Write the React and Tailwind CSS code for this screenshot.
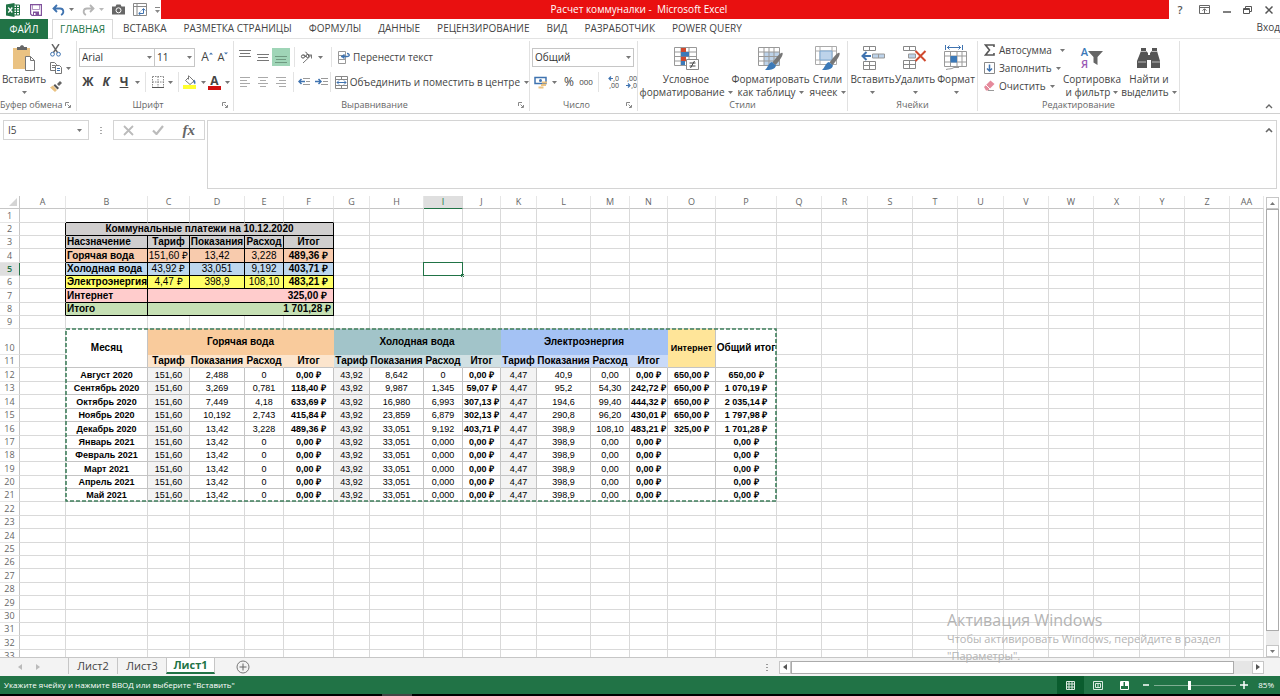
import { useState } from 'react';

const COLUMNS = [
  ['A', 46], ['B', 82], ['C', 42], ['D', 55], ['E', 39], ['F', 50], ['G', 36], ['H', 54], ['I', 39],
  ['J', 38], ['K', 36], ['L', 54], ['M', 39], ['N', 38], ['O', 48], ['P', 61], ['Q', 45], ['R', 46],
  ['S', 45], ['T', 45], ['U', 46], ['V', 45], ['W', 45], ['X', 46], ['Y', 45], ['Z', 45], ['AA', null],
];

// row heights in px, row 10 is the tall header
const ROWS = [
  14, 13, 13, 14, 13, 13, 14, 13, 13, 26, 13, 14, 13, 14, 13, 14, 13, 13, 14, 13, 13,
  14, 13, 14, 13, 13, 14, 13, 14, 13, 13, 14, 13,
];

const MONTHS = [
  ['Август 2020', '151,60', '2,488', '0', '0,00 ₽', '43,92', '8,642', '0', '0,00 ₽', '4,47', '40,9', '0,00', '0,00 ₽', '650,00 ₽', '650,00 ₽'],
  ['Сентябрь 2020', '151,60', '3,269', '0,781', '118,40 ₽', '43,92', '9,987', '1,345', '59,07 ₽', '4,47', '95,2', '54,30', '242,72 ₽', '650,00 ₽', '1 070,19 ₽'],
  ['Октябрь 2020', '151,60', '7,449', '4,18', '633,69 ₽', '43,92', '16,980', '6,993', '307,13 ₽', '4,47', '194,6', '99,40', '444,32 ₽', '650,00 ₽', '2 035,14 ₽'],
  ['Ноябрь 2020', '151,60', '10,192', '2,743', '415,84 ₽', '43,92', '23,859', '6,879', '302,13 ₽', '4,47', '290,8', '96,20', '430,01 ₽', '650,00 ₽', '1 797,98 ₽'],
  ['Декабрь 2020', '151,60', '13,42', '3,228', '489,36 ₽', '43,92', '33,051', '9,192', '403,71 ₽', '4,47', '398,9', '108,10', '483,21 ₽', '325,00 ₽', '1 701,28 ₽'],
  ...['Январь 2021', 'Февраль 2021', 'Март 2021', 'Апрель 2021', 'Май 2021'].map((m) => [
    m, '151,60', '13,42', '0', '0,00 ₽', '43,92', '33,051', '0,000', '0,00 ₽', '4,47', '398,9', '0,00', '0,00 ₽', '', '0,00 ₽',
  ]),
];

const LETTERS = 'BCDEFGHIJKLMNOP'.split('');
const BOLD_COLS = ['B', 'F', 'J', 'N', 'O', 'P'];
const GREY_COLS = ['C', 'G', 'K'];

function buildCells() {
  const cells = {};
  const put = (key, v, cls, span = 1, rowSpan = 1) => { cells[key] = { v, cls, span, rowSpan }; };
  const black = 'border-black text-[10px] ';

  'BCDEF'.split('').forEach((c) => put(c + '1', '', 'border-r-[#d9d9d9] border-b-black'));
  for (let r = 2; r <= 8; r++) put('A' + r, '', 'border-r-black border-b-[#d9d9d9]');

  put('B2', 'Коммунальные платежи на 10.12.2020', black + 'bg-[#d0cece] font-bold text-center', 5);
  ['Насзначение', 'Тариф', 'Показания', 'Расход', 'Итог'].forEach((t, i) => {
    put('BCDEF'[i] + '3', t, black + 'bg-[#d0cece] font-bold ' + (i ? 'text-center' : 'pl-[5px]'));
  });
  [
    [4, 'bg-[#f8cbad]', 'Горячая вода', '151,60 ₽', '13,42', '3,228', '489,36 ₽'],
    [5, 'bg-[#bdd7ee]', 'Холодная вода', '43,92 ₽', '33,051', '9,192', '403,71 ₽'],
    [6, 'bg-[#ffff66]', 'Электроэнергия', '4,47 ₽', '398,9', '108,10', '483,21 ₽'],
  ].forEach(([r, bg, name, ...vals]) => {
    put('B' + r, name, black + bg + ' font-bold pl-[5px]');
    vals.forEach((v, i) => put('CDEF'[i] + r, v, black + bg + ' text-center' + (i === 3 ? ' font-bold' : '')));
  });
  put('B7', 'Интернет', black + 'bg-[#ffcccc] font-bold pl-[5px]');
  put('C7', '325,00 ₽', black + 'bg-[#ffcccc] font-bold text-right pr-2.5', 4);
  put('B8', 'Итого', black + 'bg-[#c6e0b4] font-bold pl-[5px]');
  put('C8', '1 701,28 ₽', black + 'bg-[#c6e0b4] font-bold text-right pr-1.5', 4);

  const head = 'border-transparent font-bold text-center text-[10px] ';
  put('B10', 'Месяц', 'border-[#c4c4c4] font-bold text-center text-[10px]', 1, 2);
  put('C10', 'Горячая вода', head + 'bg-[#f9cb9c]', 4);
  put('G10', 'Холодная вода', head + 'bg-[#a2c4c9]', 4);
  put('K10', 'Электроэнергия', head + 'bg-[#a4c2f4]', 4);
  put('O10', 'Интернет', 'border-r-[#c4c4c4] border-b-[#c4c4c4] font-bold text-center text-[9px] bg-[#ffe599]', 1, 2);
  put('P10', 'Общий итог', 'border-[#c4c4c4] font-bold text-center text-[10px]', 1, 2);
  [['CDEF', 'bg-[#fce5cd]'], ['GHIJ', 'bg-[#d0e0e3]'], ['KLMN', 'bg-[#c9daf8]']].forEach(([cols, bg]) => {
    ['Тариф', 'Показания', 'Расход', 'Итог'].forEach((t, i) => {
      put(cols[i] + '11', t, 'border-r-transparent border-b-[#c4c4c4] font-bold text-center text-[10px] ' + bg);
    });
  });
  MONTHS.forEach((month, m) => {
    month.forEach((v, i) => {
      const c = LETTERS[i];
      const extra = (BOLD_COLS.includes(c) ? ' font-bold' : '') + (GREY_COLS.includes(c) ? ' bg-[#f3f3f3]' : '');
      put(c + (12 + m), v, 'border-[#c4c4c4] text-center text-[9px]' + extra);
    });
  });
  return cells;
}

const CELLS = buildCells();

function Arrow({ className = '' }) {
  return (
    <svg viewBox="0 0 5 3" className={'w-[5px] h-[3px] shrink-0 ' + className} fill="#777">
      <path d="M0 0h5L2.5 3z" />
    </svg>
  );
}

function Sep() {
  return <span className="w-px h-5 bg-[#e3e3e3] shrink-0" />;
}

function Btn({ label, className = '', children }) {
  return (
    <button aria-label={label} className={'flex items-center justify-center shrink-0 ' + className}>{children}</button>
  );
}

function Svg({ w = 16, h = 16, className = '', children }) {
  return (
    <svg width={w} height={h} viewBox={`0 0 ${w} ${h}`} fill="none" className={'shrink-0 ' + className}>{children}</svg>
  );
}

function Group({ title, width, launcher, children }) {
  return (
    <section className={'flex flex-col shrink-0 border-r border-[#e1e1e1] my-0.5 ' + width}>
      <div className="flex-1">{children}</div>
      <div className="h-3 flex items-center text-[9px] leading-3 text-[#666]">
        <span className="flex-1 text-center whitespace-nowrap">{title}</span>
        {launcher && (
          <Btn label={'Параметры: ' + title} className="w-3 mr-0.5">
            <Svg w={6} h={6}><path d="M.5 4V.5H4M2.500 2.500l2.500 2.500M5.500 3v2.500H3" stroke="#888" /></Svg>
          </Btn>
        )}
      </div>
    </section>
  );
}

function BigButton({ lines, width, arrowBelow, children }) {
  return (
    <button className={'flex flex-col items-center shrink-0 text-[10px] leading-[13px] whitespace-nowrap ' + width}>
      <span className="h-[30px] flex items-center justify-center">{children}</span>
      <span>{lines[0]}</span>
      {arrowBelow ? (
        <span className="h-[13px] flex items-center"><Arrow /></span>
      ) : (
        <span className="flex items-center gap-[3px]">{lines[1]}<Arrow /></span>
      )}
    </button>
  );
}

function Lines({ rows, color = '#777' }) {
  return (
    <Svg w={13} h={12}>
      {rows.map(([x, w], i) => <path key={i} d={`M${x} ${i * 3 + 1.5}h${w}`} stroke={color} />)}
    </Svg>
  );
}

function Picker({ label, value, options, width }) {
  return (
    <label className={'relative flex items-center shrink-0 h-[19px] border border-[#c6c6c6] ' + width}>
      <select aria-label={label} defaultValue={value} className="appearance-none w-full h-full pl-0.5 text-[10px] leading-4 text-[#333] bg-white outline-none">
        {options.map((o) => <option key={o}>{o}</option>)}
      </select>
      <Arrow className="absolute right-0.5 pointer-events-none" />
    </label>
  );
}

function TitleBar() {
  return (
    <header className="flex h-[19px] shrink-0 bg-white">
      <div className="w-[161px] shrink-0 flex items-center pl-1.5">
        <Svg w={14} h={14}>
          <path d="M8 2h5.5v10H8" stroke="#217346" fill="#fff" />
          <path d="M8 4.500h5M8 7h5M8 9.500h5M10.500 2v10" stroke="#217346" />
          <path d="M0 1.500L8.500 0v14L0 12.500z" fill="#217346" />
          <path d="M2.300 4.500l4 5M6.300 4.500l-4 5" stroke="#fff" strokeWidth="1.300" />
        </Svg>
        <Btn label="Сохранить" className="ml-2.5">
          <Svg w={12} h={12}>
            <path d="M.6.6h10.800v10.800H2L.6 10z" stroke="#80529c" strokeWidth="1.200" />
            <path d="M2.500 1h7v4.500h-7z" fill="#fff" stroke="#80529c" strokeWidth=".6" />
            <path d="M3 7.500h6V11H3z" fill="#80529c" /><path d="M4 9h1.500v2H4z" fill="#fff" />
          </Svg>
        </Btn>
        <Btn label="Отменить" className="ml-2.5 gap-1">
          <Svg w={13} h={12}>
            <path d="M5 1L1.500 4.500 5 8M2 4.500h6c4 0 4.500 5 1 6.500" stroke="#3f73b0" strokeWidth="1.800" />
          </Svg>
          <Arrow />
        </Btn>
        <Btn label="Повторить" className="ml-2 gap-1">
          <Svg w={13} h={12}>
            <path d="M8 1l3.500 3.500L8 8M11 4.500H5C1 4.500.5 9.500 4 11" stroke="#b5b5b5" strokeWidth="1.800" />
          </Svg>
          <Arrow className="opacity-50" />
        </Btn>
        <Btn label="Снимок" className="ml-2">
          <Svg w={13} h={11}>
            <path d="M0 2.500h3.500L4.500.5h4l1 2H13V10.500H0z" fill="#666" />
            <circle cx="6.500" cy="6.300" r="2.500" stroke="#fff" />
          </Svg>
        </Btn>
        <Btn label="Сводная таблица" className="ml-2">
          <Svg w={14} h={13}>
            <path d="M.5.5h13v12H.5zM.5 3.500h13M4 .5v12" stroke="#888" />
            <path d="M6 10.500h4.500V6M8.700 7.500l1.800-2 1.800 2M7.500 8.800l-1.800 1.700 1.800 1.700" stroke="#3f73b0" />
          </Svg>
        </Btn>
        <Btn label="Настройка панели" className="ml-2">
          <Svg w={5} h={6}><path d="M0 .5h5" stroke="#888" /><path d="M0 3h5L2.500 6z" fill="#888" /></Svg>
        </Btn>
      </div>
      <div className="flex-1 bg-[#e91010] text-white text-[10px] leading-[19px] text-center whitespace-pre pr-[52px]">Расчет коммуналки -  Microsoft Excel</div>
      <div className="w-[111px] shrink-0 flex items-center justify-between pl-[5px] pr-[7px] text-[#555]">
        <Btn label="Справка" className="w-3 text-[11px] leading-4 font-semibold">?</Btn>
        <Btn label="Параметры ленты">
          <Svg w={11} h={9}>
            <path d="M.5.5h10v8H.5zM.5 2.500h10M5.500 8V4M3.500 5.700l2-2 2 2" stroke="#666" />
          </Svg>
        </Btn>
        <Btn label="Свернуть"><Svg w={8} h={9}><path d="M0 7h8" stroke="#555" strokeWidth="1.500" /></Svg></Btn>
        <Btn label="Восстановить">
          <Svg w={9} h={8}><path d="M2.500 2V.5h6v5H7M.5 2.500h6v5h-6zM.5 3.500h6" stroke="#555" /></Svg>
        </Btn>
        <Btn label="Закрыть"><Svg w={8} h={8}><path d="M.5.5l7 7M7.500.5l-7 7" stroke="#555" strokeWidth="1.500" /></Svg></Btn>
      </div>
    </header>
  );
}

function RibbonTabs() {
  const tabs = ['ВСТАВКА', 'РАЗМЕТКА СТРАНИЦЫ', 'ФОРМУЛЫ', 'ДАННЫЕ', 'РЕЦЕНЗИРОВАНИЕ', 'ВИД', 'РАЗРАБОТЧИК', 'POWER QUERY'];
  return (
    <nav className="flex h-5 shrink-0 bg-white text-[10px] leading-5 text-[#444] whitespace-nowrap">
      <button className="w-12 bg-[#217346] text-white">ФАЙЛ</button>
      <span className="w-1 border-b border-[#d9d9d9]" />
      <button className="w-[61px] border-x border-t border-[#d9d9d9] text-[#217346] leading-[19px]">ГЛАВНАЯ</button>
      <div className="flex flex-1 gap-[17px] pl-2.5 border-b border-[#e3e3e3] overflow-hidden">
        {tabs.map((t) => <button key={t} className="leading-[19px]">{t}</button>)}
        <a href="#login" className="ml-auto leading-4">Вход</a>
      </div>
    </nav>
  );
}

function ClipboardGroup() {
  return (
    <Group title="Буфер обмена" width="w-[77px]" launcher>
      <div className="flex pt-0.5">
        <BigButton lines={['Вставить']} width="w-12" arrowBelow>
          <Svg w={24} h={26}>
            <path d="M1 3h17v21H1z" fill="#eac282" />
            <path d="M5 5V2h3c0-2.500 4-2.500 4 0h3v3z" fill="#666" />
            <path d="M13.500 11.500h5l4 4v10h-9z" fill="#fff" stroke="#777" />
            <path d="M18.500 11.500v4h4" stroke="#777" />
          </Svg>
        </BigButton>
        <div className="flex flex-col gap-1 pl-0.5">
          <Btn label="Вырезать" className="h-[14px] w-[11px]">
            <Svg w={11} h={13}>
              <path d="M2 0l5.500 8.500M9 0L3.500 8.500" stroke="#666" strokeWidth="1.400" />
              <circle cx="2.500" cy="10.200" r="1.900" stroke="#3f73b0" /><circle cx="8.500" cy="10.200" r="1.900" stroke="#3f73b0" />
            </Svg>
          </Btn>
          <Btn label="Копировать" className="h-[14px] gap-1">
            <Svg w={12} h={12}>
              <path d="M.5.5h4l2 2v6h-6zM2 3.500h3M2 5.500h3" stroke="#777" />
              <path d="M5.500 3.500h4l2 2v6h-6z" fill="#fff" stroke="#777" /><path d="M7 6.500h3M7 8.500h3" stroke="#3f73b0" />
            </Svg>
            <Arrow />
          </Btn>
          <Btn label="Формат по образцу" className="h-[14px] w-[12px]">
            <Svg w={12} h={11}>
              <path d="M7 3l3-3 2 2-3 3z" fill="#666" /><path d="M5 3l4 4-1.500 1.500-4-4z" fill="#555" />
              <path d="M3 4.500L7 9l-2 2-5-4.500z" fill="#eac282" />
            </Svg>
          </Btn>
        </div>
      </div>
    </Group>
  );
}

function FontGroup() {
  return (
    <Group title="Шрифт" width="w-[157px]" launcher>
      <div className="flex flex-col gap-[5px] pt-1.5 pl-0.5 text-[#444]">
        <div className="flex items-center h-5">
          <Picker label="Шрифт" value="Arial" options={['Arial', 'Calibri']} width="w-[76px]" />
          <Picker label="Размер" value="11" options={['10', '11', '12']} width="w-[40px] border-l-0" />
          <Btn label="Увеличить размер" className="ml-1 w-4 text-[12px]">A<Svg w={4} h={10}><path d="M0 2.500L2 .5l2 2z" fill="#3f73b0" /></Svg></Btn>
          <Btn label="Уменьшить размер" className="w-4 text-[11px]">A<Svg w={4} h={10}><path d="M0 .5h4l-2 2z" fill="#3f73b0" /></Svg></Btn>
        </div>
        <div className="flex items-center h-5">
          <Btn label="Полужирный" className="w-[18px] text-[12px] font-bold">Ж</Btn>
          <Btn label="Курсив" className="w-[18px] text-[12px] font-bold italic">К</Btn>
          <Btn label="Подчеркнутый" className="w-[18px] text-[12px] font-bold underline">Ч</Btn>
          <Btn label="Вид подчеркивания" className="w-2"><Arrow /></Btn>
          <span className="w-1" /><Sep />
          <Btn label="Границы" className="ml-1 w-6 gap-1">
            <Svg w={12} h={12}><path d="M.5.500v11M6 .500v11M11.500.500v11M.500.500h11M.500 6h11" stroke="#888" strokeDasharray="1.500 1" /><path d="M0 11.500h12" stroke="#555" /></Svg>
            <Arrow />
          </Btn>
          <span className="w-1" /><Sep />
          <Btn label="Цвет заливки" className="ml-1 gap-1">
            <Svg w={14} h={14}>
              <path d="M2.500 5.500L6.500 1.500l4.500 4.500-4 3.500z" fill="#fff" stroke="#777" /><path d="M5.500.500v4" stroke="#777" />
              <path d="M11 4.500c1.500 1 2 3 1 5l-1.500-2z" fill="#3f73b0" /><path d="M0 10h13v4H0z" fill="#ffff2e" />
            </Svg>
            <Arrow />
          </Btn>
          <Btn label="Цвет текста" className="ml-0.5 gap-1">
            <span className="w-[13px] h-[15px] border-b-4 border-[#d01010] text-[12px] leading-[11px] font-bold">A</span>
            <Arrow />
          </Btn>
        </div>
      </div>
    </Group>
  );
}

function AlignmentGroup() {
  const full = [[0, 12], [1, 10], [0, 12]];
  return (
    <Group title="Выравнивание" width="w-[296px]" launcher>
      <div className="flex flex-col gap-[5px] pt-1.5 pl-0.5">
        <div className="flex items-center h-5">
          <Btn label="По верхнему краю" className="w-[18px] pb-1"><Lines rows={full} /></Btn>
          <Btn label="По середине" className="w-[18px] pt-1"><Lines rows={full} /></Btn>
          <Btn label="По нижнему краю" className="w-[18px] h-[18px] pt-2 bg-[#9fd5b7]"><Lines rows={full} color="#6f9a81" /></Btn>
          <span className="w-1" /><Sep />
          <Btn label="Ориентация" className="ml-1 w-6 gap-1">
            <Svg w={14} h={13}>
              <path d="M3 12L11.500 4M11.500 7.500V4H8" stroke="#777" />
              <circle cx="3" cy="5.500" r="1.600" stroke="#555" /><path d="M4 3.500l2 2.500M5.500.800l3.500 4" stroke="#555" /><circle cx="7.500" cy="5" r="1.500" stroke="#555" />
            </Svg>
            <Arrow />
          </Btn>
          <span className="w-2" /><Sep />
          <Btn label="Перенести текст" className="ml-1.5 gap-0.5 text-[10px]">
            <Svg w={13} h={13}>
              <path d="M.500.500h7v12h-7zM.500 4.500h7M.500 8.500h7" stroke="#999" />
              <path d="M3 5.500h6c3 0 3-3 0-3M6.500 3.500l-2.500 2 2.500 2" stroke="#3f73b0" strokeWidth="1.300" />
            </Svg>
            <span className="whitespace-nowrap">Перенести текст</span>
          </Btn>
        </div>
        <div className="flex items-center h-5">
          <Btn label="По левому краю" className="w-[18px]"><Lines rows={[[1, 10], [1, 7], [1, 10], [1, 7]]} color="#aaa" /></Btn>
          <Btn label="По центру" className="w-[18px]"><Lines rows={[[1, 10], [3, 6], [1, 10], [3, 6]]} color="#aaa" /></Btn>
          <Btn label="По правому краю" className="w-[18px]"><Lines rows={[[1, 10], [4, 7], [1, 10], [4, 7]]} color="#aaa" /></Btn>
          <span className="w-1" /><Sep />
          <Btn label="Уменьшить отступ" className="ml-0.5 w-[17px]">
            <Svg w={13} h={10}><path d="M5 1.500h7M8 4.500h4M5 7.500h7" stroke="#999" /><path d="M7 4.500H1M3.500 2L1 4.500 3.500 7" stroke="#3f73b0" strokeWidth="1.500" /></Svg>
          </Btn>
          <Btn label="Увеличить отступ" className="w-[17px]">
            <Svg w={13} h={10}><path d="M6 1.500h7M8 4.500h5M6 7.500h7" stroke="#999" /><path d="M0 4.500h6M3.500 2L6 4.500 3.500 7" stroke="#3f73b0" strokeWidth="1.500" /></Svg>
          </Btn>
          <Sep />
          <Btn label="Объединить и поместить в центре" className="ml-1 gap-0.5 text-[10px]">
            <Svg w={13} h={13}>
              <path d="M.500.500h12v12H.500zM.500 3.500h12M.500 9.500h12M6.500.500v3M6.500 9.500v3" stroke="#888" />
              <path d="M2 6.500h9M4 4.500l-2 2 2 2M9 4.500l2 2-2 2" stroke="#3f73b0" />
            </Svg>
            <span className="whitespace-nowrap">Объединить и поместить в центре</span>
            <Arrow className="ml-0.5" />
          </Btn>
        </div>
      </div>
    </Group>
  );
}

function NumberGroup() {
  return (
    <Group title="Число" width="w-[108px]" launcher>
      <div className="flex flex-col gap-[5px] pt-1.5 pl-0.5">
        <div className="flex items-center h-5">
          <Picker label="Формат числа" value="Общий" options={['Общий', 'Числовой', 'Денежный']} width="w-[102px]" />
        </div>
        <div className="flex items-center h-5">
          <Btn label="Денежный формат" className="ml-0.5 gap-1">
            <Svg w={14} h={13}>
              <path d="M1 1.500h11v6H1z" stroke="#3f73b0" strokeWidth="1.500" /><circle cx="6.500" cy="4.500" r="1.500" fill="#3f73b0" />
              <path d="M8 5.500h5v2H8zM7 8h5v2H7zM4.500 10.500h5v2h-5z" fill="#eac282" />
            </Svg>
            <Arrow />
          </Btn>
          <Btn label="Процентный формат" className="ml-1 w-4 text-[12px]">%</Btn>
          <Btn label="Формат с разделителями" className="w-[18px] text-[8px]">000</Btn>
          <span className="w-1" /><Sep />
          <Btn label="Увеличить разрядность" className="ml-1 w-4 flex-col items-end text-[7px] leading-[7px]">
            <span className="flex items-center"><Svg w={5} h={5}><path d="M5 2.500H1M3 .500l-2 2 2 2" stroke="#3f73b0" strokeWidth="1.200" /></Svg>,0</span>
            <span>,00</span>
          </Btn>
          <Btn label="Уменьшить разрядность" className="ml-0.5 w-4 flex-col items-end text-[7px] leading-[7px]">
            <span>,00</span>
            <span className="flex items-center"><Svg w={5} h={5}><path d="M0 2.500h4M2 .500l2 2-2 2" stroke="#3f73b0" strokeWidth="1.200" /></Svg>,0</span>
          </Btn>
        </div>
      </div>
    </Group>
  );
}

function Brush() {
  return (
    <>
      <path d="M24.500 7c1.500 1.500-4 9-7 12l-3-2.500c3-4 8.500-11 10-9.500z" fill="#777" />
      <path d="M14 16l4 3.500c-1 4-6 5-11 4.500 3-2 3-7 7-8z" fill="#3b79b8" />
    </>
  );
}

function StylesGroup() {
  return (
    <Group title="Стили" width="w-[210px]">
      <div className="flex pt-0.5 pl-0.5">
        <BigButton lines={['Условное', 'форматирование']} width="w-[92px]">
          <Svg w={25} h={25}>
            <path d="M.500 1.500h22v18H.500zM.500 6h22M.500 10.500h22M.500 15h22M7 1.500v18M15 1.500v18" stroke="#999" fill="#fff" />
            <path d="M7 2h5v4H7zM7 10.500h5V15H7z" fill="#d0492e" /><path d="M7 6h8v4.500H7zM7 15h4v4H7z" fill="#3b79b8" />
            <path d="M12.500 13.500h12v10h-12z" fill="#fff" stroke="#888" /><path d="M15.500 17h6M15.500 20h6M20.500 15l-4 7" stroke="#444" />
          </Svg>
        </BigButton>
        <BigButton lines={['Форматировать', 'как таблицу']} width="w-[77px]">
          <Svg w={26} h={25}>
            <path d="M.500 1.500h21v18H.500z" fill="#fff" /><path d="M6 6h15v13.500H6z" fill="#bdd3ea" />
            <path d="M.500 1.500h21v18H.500zM.500 6h21M.500 10.500h21M.500 15h21M6 1.500v18M11 1.500v18M16 1.500v18" stroke="#999" />
            <Brush />
          </Svg>
        </BigButton>
        <BigButton lines={['Стили', 'ячеек']} width="w-[37px]">
          <Svg w={26} h={25}>
            <path d="M.500.500h21v18H.500zM.500 5h21M.500 14h21M5 .500v18M17 .500v18" stroke="#aaa" fill="#fff" />
            <path d="M5 5h12v9H5z" fill="#bdd3ea" stroke="#7fa8d0" />
            <Brush />
          </Svg>
        </BigButton>
      </div>
    </Group>
  );
}

function CellsGroup() {
  return (
    <Group title="Ячейки" width="w-[130px]">
      <div className="flex pt-0.5 pl-[3px]">
        <BigButton lines={['Вставить']} width="w-[43px]" arrowBelow>
          <Svg w={24} h={25}>
            <path d="M2.500.500h12v4h-12zM8.500.500v4M2.500 15.500h12v8h-12zM2.500 19.500h12M8.500 15.500v8" stroke="#888" />
            <path d="M11.500 8h12v4h-12z" fill="#bdd3ea" stroke="#999" /><path d="M17.500 8v4" stroke="#999" />
            <path d="M10 10H2M5.500 6L1.500 10l4 4" stroke="#3f73b0" strokeWidth="2" />
          </Svg>
        </BigButton>
        <BigButton lines={['Удалить']} width="w-[42px]" arrowBelow>
          <Svg w={24} h={25}>
            <path d="M.500.500h12v4H.500zM6.500.500v4M.500 14.500h12v8H.500zM.500 18.500h12M6.500 14.500v8" stroke="#888" />
            <path d="M5.500 8h7v4h-7z" fill="#bdd3ea" stroke="#999" />
            <path d="M12.500 5l10 10M22.500 5l-10 10" stroke="#d0492e" strokeWidth="2" />
          </Svg>
        </BigButton>
        <BigButton lines={['Формат']} width="w-[40px]" arrowBelow>
          <Svg w={24} h={26}>
            <path d="M1.500 0v5M18.500 0v5M3 2.500h14M5.500.500l-2 2 2 2M14.500.500l2 2-2 2" stroke="#3f73b0" />
            <path d="M.500 6.500h22v15H.500zM.500 11h22M.500 17h22M6.500 6.500v15M13 6.500v15M18 6.500v15" stroke="#999" />
            <path d="M6.500 11H13v6.500H6.500z" fill="#3b79b8" />
            <path d="M2 24.500c3-1 5 0 8-2h5" stroke="#999" />
          </Svg>
        </BigButton>
      </div>
    </Group>
  );
}

function EditingGroup() {
  const row = 'h-[18px] justify-start gap-1 text-[10px] whitespace-nowrap';
  return (
    <Group title="Редактирование" width="w-[202px]">
      <div className="flex">
        <div className="flex flex-col w-[84px] pl-1.5">
          <Btn label="Автосумма" className={row}>
            <Svg w={11} h={12}><path d="M10 3V1H1.500l4 5-4 5H10V9" stroke="#555" strokeWidth="1.600" /></Svg>
            Автосумма<Arrow className="ml-1" />
          </Btn>
          <Btn label="Заполнить" className={row}>
            <Svg w={11} h={12}><path d="M.500.500h10v11H.500z" stroke="#888" /><path d="M5.500 2.500v6M3 6.500L5.500 9 8 6.500" stroke="#3f73b0" strokeWidth="1.500" /></Svg>
            Заполнить<Arrow />
          </Btn>
          <Btn label="Очистить" className={row}>
            <Svg w={11} h={12}><path d="M0 7l6.500-6.500 4 3.500L4 10.500H2z" fill="#e58a9c" /><path d="M2 5l4 4" stroke="#fff" /><path d="M4 10.500h6" stroke="#999" /></Svg>
            Очистить<Arrow />
          </Btn>
        </div>
        <div className="flex pt-0.5">
          <BigButton lines={['Сортировка', 'и фильтр']} width="w-[60px]">
            <span className="flex items-center">
              <span className="flex flex-col text-[11px] leading-3 font-semibold"><span className="text-[#3b79b8]">А</span><span className="text-[#9a5bb5]">Я</span></span>
              <Svg w={15} h={14}><path d="M0 0h15L9.500 6v8L5.500 11.500V6z" fill="#666" /></Svg>
            </span>
          </BigButton>
          <BigButton lines={['Найти и', 'выделить']} width="w-[54px]">
            <Svg w={24} h={22}>
              <path d="M4 1h5v3l2 2v2h2V6l2-2V1h5v3l3 10v7h-9v-8h-4v8H0v-7L4 4z" fill="#555" />
              <path d="M4 4.500h5M15 4.500h5M1 15h8M15 15h8" stroke="#fff" strokeWidth=".6" />
            </Svg>
          </BigButton>
        </div>
      </div>
    </Group>
  );
}

function FormulaBar() {
  return (
    <div className="flex shrink-0 h-[82px] pt-1.5 pl-[3px] pr-[3px] bg-white">
      <label className="relative flex items-center w-[86px] h-5 border border-[#d4d4d4] shrink-0">
        <input aria-label="Имя" defaultValue="I5" className="w-full pl-1 text-[10px] leading-4 text-[#444] outline-none" />
        <Arrow className="absolute right-1.5" />
      </label>
      <span className="w-6 h-5 flex items-center justify-center">
        <Svg w={2} h={9}><path d="M0 1.500h2M0 4.500h2M0 7.500h2" stroke="#aaa" /></Svg>
      </span>
      <div className="flex items-center justify-around w-[92px] h-5 border border-[#d4d4d4] shrink-0">
        <Btn label="Отмена"><Svg w={11} h={11}><path d="M1 1l9 9M10 1l-9 9" stroke="#bbb" strokeWidth="1.800" /></Svg></Btn>
        <Btn label="Ввод"><Svg w={12} h={10}><path d="M1 5.500L4.500 9 11 1" stroke="#bbb" strokeWidth="2.200" /></Svg></Btn>
        <Btn label="Вставить функцию" className="text-[15px] leading-4 italic font-bold text-[#666] font-['Liberation_Serif',serif]">fx</Btn>
      </div>
      <div className="relative flex-1 ml-0.5 h-[69px]">
        <textarea aria-label="Строка формул" className="block w-full h-full resize-none border border-[#d4d4d4] outline-none" />
        <Btn label="Свернуть строку формул" className="absolute right-1 top-2">
          <Svg w={8} h={5}><path d="M1 4l3-3 3 3" stroke="#666" strokeWidth="1.600" /></Svg>
        </Btn>
      </div>
    </div>
  );
}

function Sheet() {
  const covered = new Set();
  return (
    <div className="relative flex-1 min-w-0 overflow-hidden">
      <table className="table-fixed w-full border-separate border-spacing-0 font-['Liberation_Sans',Arial,sans-serif] text-black leading-3">
        <colgroup>
          <col className="w-5" />
          {COLUMNS.map(([c, w]) => <col key={c} style={w ? { width: w } : undefined} />)}
        </colgroup>
        <thead className="font-['Open_Sans','Noto_Sans',sans-serif] text-[9px] text-[#666]">
          <tr className="h-[13px]">
            <th className="p-0 border-r border-b border-[#c6c6c6]">
              <Svg w={8} h={8} className="ml-auto mr-0.5"><path d="M8 0v8H0z" fill="#d4d4d4" /></Svg>
            </th>
            {COLUMNS.map(([c]) => (
              <th key={c} className={'p-0 border-r border-b font-normal ' + (c === 'I' ? 'bg-[#dfdfdf] border-r-[#d9d9d9] border-b-[#217346] text-[#217346]' : 'border-r-[#e6e6e6] border-b-[#c6c6c6]')}>{c}</th>
            ))}
          </tr>
        </thead>
        <tbody>
          {ROWS.map((h, i) => {
            const r = i + 1;
            return (
              <tr key={r} style={{ height: h }}>
                <th className={"p-0 border-r border-b text-[9px] font-['Open_Sans','Noto_Sans',sans-serif] align-bottom " + (r === 5 ? 'bg-[#dfdfdf] border-r-[#217346] border-b-[#e6e6e6] text-[#217346] font-semibold' : 'border-r-[#c6c6c6] border-b-[#e6e6e6] text-[#666] font-normal')}>{r}</th>
                {COLUMNS.map(([c], k) => {
                  const key = c + r;
                  if (covered.has(key)) return null;
                  const cell = CELLS[key];
                  if (!cell) {
                    return (
                      <td key={key} className="p-0 border-r border-b border-[#d9d9d9] relative">
                        {key === 'I5' && (
                          <span className="absolute -left-px -right-px -top-px -bottom-px border border-[#217346]">
                            <span className="absolute -right-0.5 -bottom-0.5 w-[3px] h-[3px] bg-[#217346]" />
                          </span>
                        )}
                      </td>
                    );
                  }
                  for (let dr = 0; dr < cell.rowSpan; dr++) {
                    for (let dc = 0; dc < cell.span; dc++) covered.add(COLUMNS[k + dc][0] + (r + dr));
                  }
                  return (
                    <td key={key} colSpan={cell.span} rowSpan={cell.rowSpan} className={'p-0 border-r border-b whitespace-nowrap ' + cell.cls}>
                      {cell.v && <div className="-mx-1">{cell.v}</div>}
                    </td>
                  );
                })}
              </tr>
            );
          })}
        </tbody>
      </table>
      {/* copied range B10:P21 */}
      <svg className="absolute left-[65px] top-[132px] w-[712px] h-[174px] pointer-events-none" viewBox="0 0 712 174" fill="none">
        <rect x="1" y="1" width="710" height="172" stroke="#3f7f5c" strokeWidth="1.6" strokeDasharray="4 2" />
      </svg>
    </div>
  );
}

function VerticalScroll() {
  return (
    <div className="w-4 shrink-0 flex flex-col items-center pt-px">
      <Btn label="Вверх" className="w-[13px] h-3 border border-[#c6c6c6] bg-white"><Svg w={5} h={3}><path d="M0 3h5L2.500 0z" fill="#777" /></Svg></Btn>
      <div className="w-[13px] flex-1 bg-[#ececec] pb-[14px]"><div className="h-full bg-white border border-[#ababab]" /></div>
      <Btn label="Вниз" className="w-[13px] h-3 border border-[#c6c6c6] bg-white"><Arrow /></Btn>
    </div>
  );
}

function SheetTabs({ active, onSelect }) {
  return (
    <div className="flex h-[19px] shrink-0 bg-[#f3f3f3] border-t border-[#c6c6c6] text-[11px] text-[#444]">
      <div className="flex items-center w-[68px] gap-[14px] pl-[18px]">
        <Btn label="Предыдущий лист"><Svg w={4} h={6}><path d="M4 0v6L0 3z" fill="#bbb" /></Svg></Btn>
        <Btn label="Следующий лист"><Svg w={4} h={6}><path d="M0 0v6l4-3z" fill="#bbb" /></Svg></Btn>
      </div>
      {['Лист2', 'Лист3', 'Лист1'].map((name) => (
        <button
          key={name}
          onClick={() => onSelect(name)}
          className={'w-[49px] h-4 leading-[14px] border-l border-[#c6c6c6] ' + (name === active ? 'bg-white border-r border-b-2 border-b-[#217346] text-[#217346] font-bold' : '')}
        >
          {name}
        </button>
      ))}
      <Btn label="Новый лист" className="ml-[21px]">
        <Svg w={14} h={14}><circle cx="7" cy="7" r="6" stroke="#777" /><path d="M3.500 7h7M7 3.500v7" stroke="#666" /></Svg>
      </Btn>
      <div className="ml-auto flex items-center w-[514px]">
        <Svg w={2} h={9} className="mr-[11px]"><path d="M0 1.500h2M0 4.500h2M0 7.500h2" stroke="#999" /></Svg>
        <Btn label="Влево" className="w-3 h-[13px] border border-[#c6c6c6] bg-white"><Svg w={4} h={6}><path d="M4 0v6L0 3z" fill="#555" /></Svg></Btn>
        <div className="flex-1 h-[13px] bg-[#e6e6e6] pr-[18px]"><div className="h-full bg-white border border-[#ababab]" /></div>
        <Btn label="Вправо" className="w-3 h-[13px] border border-[#c6c6c6] bg-white mr-4"><Svg w={4} h={6}><path d="M0 0v6l4-3z" fill="#555" /></Svg></Btn>
      </div>
    </div>
  );
}

function StatusBar() {
  const [zoom, setZoom] = useState(85);
  return (
    <footer className="flex items-center h-[18px] shrink-0 bg-[#217346] text-white text-[8px]">
      <span className="pl-1 whitespace-nowrap">Укажите ячейку и нажмите ВВОД или выберите "Вставить"</span>
      <div className="ml-auto flex items-center h-full">
        <Btn label="Обычный" className="w-[27px] h-full bg-[#0a5c2e]">
          <Svg w={9} h={9}><path d="M.500.500h8v8h-8zM.500 3h8M.500 6h8M3 .500v8M6 .500v8" stroke="#dcebe2" /></Svg>
        </Btn>
        <Btn label="Разметка страницы" className="w-[27px] h-full">
          <Svg w={10} h={9}><path d="M.500.500h9v8h-9zM2.500 2.500h5v4h-5zM5 3v3" stroke="#dcebe2" /></Svg>
        </Btn>
        <Btn label="Страничный режим" className="w-[27px] h-full">
          <Svg w={9} h={9}><path d="M.500.500h8v8h-8z" stroke="#fff" /><path d="M1 0h2.500v5H1zM5 0h3v5H5z" fill="#fff" /></Svg>
        </Btn>
        <Btn label="Уменьшить" className="ml-1 w-2"><Svg w={6} h={8}><path d="M0 4h6" stroke="#fff" strokeWidth="1.500" /></Svg></Btn>
        <input
          type="range" min="0" max="200" value={zoom} aria-label="Масштаб"
          onChange={(e) => setZoom(Number(e.target.value))}
          className="mx-1 w-[82px] h-px appearance-none bg-[#7fae93] [&::-webkit-slider-thumb]:appearance-none [&::-webkit-slider-thumb]:w-[3px] [&::-webkit-slider-thumb]:h-[9px] [&::-webkit-slider-thumb]:bg-white"
        />
        <Btn label="Увеличить" className="w-2"><Svg w={8} h={8}><path d="M0 4h8M4 0v8" stroke="#fff" strokeWidth="1.500" /></Svg></Btn>
        <span className="w-8 pr-1.5 text-right">{zoom}%</span>
      </div>
    </footer>
  );
}

export default function App() {
  const [sheet, setSheet] = useState('Лист1');

  return (
    <div className="relative flex flex-col h-screen w-full overflow-hidden bg-white font-['Open_Sans','Noto_Sans',sans-serif] text-[#444]">
      <TitleBar />
      <RibbonTabs />
      <div className="flex h-[75px] shrink-0 border-b border-[#d0d0d0]">
        <ClipboardGroup />
        <FontGroup />
        <AlignmentGroup />
        <NumberGroup />
        <StylesGroup />
        <CellsGroup />
        <EditingGroup />
        <Btn label="Свернуть ленту" className="ml-auto mr-[7px] self-end mb-1">
          <Svg w={8} h={5}><path d="M1 4l3-3 3 3" stroke="#666" strokeWidth="1.400" /></Svg>
        </Btn>
      </div>
      <FormulaBar />
      <main className="flex flex-1 min-h-0">
        <Sheet />
        <VerticalScroll />
      </main>
      <SheetTabs active={sheet} onSelect={setSheet} />
      <StatusBar />
      <div className="h-0.5 shrink-0 bg-black flex"><span className="ml-[382px] w-[30px] bg-[#444]" /></div>
      <aside className="absolute right-[13px] bottom-8 w-[320px] text-[#b4b4b4] pointer-events-none">
        <p className="text-[16px] leading-5">Активация Windows</p>
        <p className="text-[11px] leading-[17px]">Чтобы активировать Windows, перейдите в раздел<br />"Параметры".</p>
      </aside>
    </div>
  );
}
